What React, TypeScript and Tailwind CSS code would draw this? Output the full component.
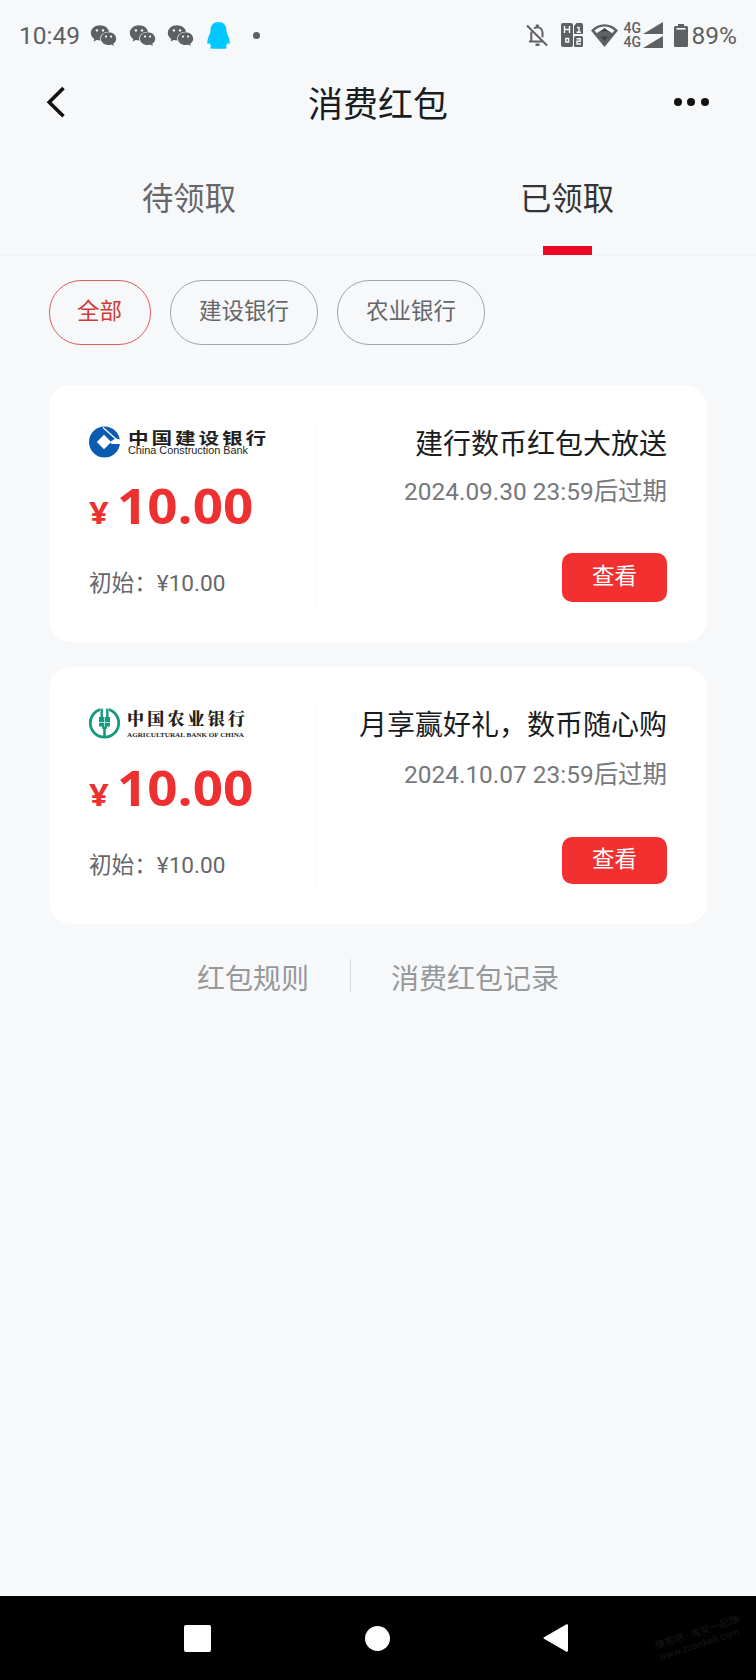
import React from "react";
import { AiFillWechat } from "react-icons/ai";

const CJK = "font-['Roboto','Noto_Sans_CJK_SC',sans-serif]";

function StatusBar() {
  return (
    <div className="flex h-[70px] items-center pl-[19px] pr-[19px] text-[#5f6062]">
      <span className="w-[61px] whitespace-nowrap pt-px text-[24.5px] leading-[30px]">10:49</span>
      <div className="ml-[9px] flex items-center gap-[9.5px]">
        <AiFillWechat className="size-[29px]" />
        <AiFillWechat className="size-[29px]" />
        <AiFillWechat className="size-[29px]" />
      </div>
      <svg className="ml-[12px] h-[27px] w-[23px]" viewBox="0 0 23 27" fill="#00c8ff">
        <path d="M11.5 0C6.500 0 3.800 3.400 3.600 7.500c0 1.800-.2 3-.9 4.400C1.300 14.800.5 17.500.3 20c0 1.400.2 2.200.6 2.100.5-.1 1-.6 1.500-1.300.4 1.400 1.100 2.500 2.100 3.500-.9.300-1.200.8-1.200 1.300 0 .8.8 1.200 1.800 1.200h12.800c1 0 1.800-.4 1.800-1.200 0-.5-.3-1-1.200-1.300 1-1 1.700-2.100 2.100-3.500.5.700 1 1.200 1.500 1.300.4.100.6-.7.6-2.100-.2-2.500-1-5.200-2.400-8.100-.7-1.400-.9-2.600-.9-4.400C19.200 3.400 16.500 0 11.500 0z" />
      </svg>
      <span className="ml-[23px] size-[7px] rounded-full bg-[#5f6062]" />

      <div className="ml-auto flex items-center">
        <svg className="h-[24px] w-[22px]" viewBox="0 0 22 24" fill="none" stroke="#5f6062" strokeWidth="2">
          <path d="M1 2.500L21 22.500" />
          <path d="M8 5.500C9 4.500 10 4.200 11.300 4.200c3.200 0 5.200 2.500 5.200 5.600v4.500M5.300 8.500v9M3 18.500h13" />
          <path d="M11.300 1.500v3" strokeWidth="3" />
          <path d="M9.500 21.700h4" strokeWidth="2.400" />
        </svg>
        <svg className="ml-[13px] h-[24px] w-[22px]" viewBox="0 0 22 24">
          <rect x="0" y="0" width="12" height="24" rx="2" fill="#5f6062" />
          <path d="M15.500 0H20a2 2 0 0 1 2 2v9h-9V3z" fill="#5f6062" />
          <rect x="13" y="13" width="9" height="11" rx="1.500" fill="#5f6062" />
          <path d="M3.500 3v7M8.500 3v7M3.500 6.500h5M4.800 15.500h2.800v3.500H4.800zM16 4.500h2v5M15.500 9.300h4.500M15.500 15.800h3.700v2.400h-3.200V21h4" fill="none" stroke="#f6f8fa" strokeWidth="1.400" />
        </svg>
        <svg className="ml-[8px] h-[23px] w-[27px]" viewBox="0 0 27 23">
          <path d="M0 6.500C7.500-1.700 19.500-1.700 27 6.500L13.500 23z" fill="#5f6062" />
          <path d="M3.500 6.500C9.500 1.300 17.500 1.300 23.500 6.500L21 9.300C19.500 7.500 16.500 6 13.500 6S7.500 7.500 6 9.300z" fill="#f6f8fa" />
          <path d="M9 7.500l4.500-3.500L18 7.500zM10 12.500h7L13.500 17z" fill="#414244" />
        </svg>
        <div className="ml-[6px] flex w-[19px] flex-col">
          <span className="h-[14px] text-[14px] font-medium leading-[14px]">4G</span>
          <span className="h-[14px] text-[14px] font-medium leading-[14px]">4G</span>
        </div>
        <svg className="h-[26px] w-[20px]" viewBox="0 0 20 26" fill="#5f6062">
          <path d="M20 0v12H0zM20 14v12H0z" />
        </svg>
        <svg className="ml-[11px] h-[23px] w-[14px]" viewBox="0 0 14 23">
          <path d="M4 0h6v2h2.500A1.500 1.500 0 0 1 14 3.500v18a1.500 1.500 0 0 1-1.500 1.500h-11A1.500 1.500 0 0 1 0 21.500v-18A1.500 1.500 0 0 1 1.500 2H4z" fill="#5f6062" />
          <path d="M2.500 4.800h9" stroke="#f6f8fa" strokeWidth="1.600" />
        </svg>
        <span className="ml-[4px] pt-px text-[24.500px] leading-[30px]">89%</span>
      </div>
    </div>
  );
}

function TitleBar() {
  return (
    <header className="flex h-[66px] items-center justify-between pl-[46px] pr-[47px]">
      <svg className="mb-[3px] h-[32px] w-[20px]" viewBox="0 0 20 32" fill="none" stroke="#111" strokeWidth="3.600">
        <path d="M17.500 2L3.200 16.200L17.500 30.300" />
      </svg>
      <h1 className="pl-[16px] pt-[6px] text-[35px] leading-[50px] text-[#1b1c1e]">消费红包</h1>
      <div className="mb-[3px] flex gap-[5.500px]">
        <span className="size-[8px] rounded-full bg-[#111]" />
        <span className="size-[8px] rounded-full bg-[#111]" />
        <span className="size-[8px] rounded-full bg-[#111]" />
      </div>
    </header>
  );
}

function Tab({ label, active }: { label: string; active?: boolean }) {
  return (
    <div className="flex h-full flex-1 flex-col items-center justify-between pt-[42px]">
      <span className={active ? "text-[31.300px] leading-[44px] text-[#333436]" : "text-[31.300px] leading-[44px] text-[#66676a]"}>{label}</span>
      {active && <span className="h-[9px] w-[49px] bg-[#ea0826]" />}
    </div>
  );
}

function Pill({ label, active }: { label: string; active?: boolean }) {
  return (
    <button
      className={
        active
          ? "h-[65px] w-[102px] rounded-[32px] border border-[#d9605f] pb-[2px] pr-[1px] text-[22.500px] text-[#cf3a36]"
          : "h-[65px] w-[148px] rounded-[32px] border border-[#a3a4a6] pb-[2px] text-[22.500px] text-[#66676a]"
      }
    >
      {label}
    </button>
  );
}

function CcbLogo() {
  return (
    <div className="flex h-[34px] items-center">
      <svg className="h-[32px] w-[32px] shrink-0" viewBox="0 0 32 32">
        <circle cx="15.500" cy="16" r="15.500" fill="#0b5bb0" />
        <path d="M15 8.800L22.200 16L15 23.200L7.800 16z" fill="#fff" />
        <path d="M21 16l5.500-3.500 5.500 1v4.500h-9.500z" fill="#fff" />
        <path d="M14 1.500L28 14" stroke="#fff" strokeWidth="1.200" />
      </svg>
      <svg className="ml-[7px] h-[34px] w-[140px] overflow-visible" viewBox="0 0 140 34" fill="#231f20">
        <text x="0" y="18.500" transform="scale(1.260 1)" fontSize="16.400" letterSpacing="2.250" fontWeight="700" fontFamily="Noto Sans CJK SC, sans-serif">中国建设银行</text>
        <text x="0" y="29" textLength="120" lengthAdjust="spacingAndGlyphs" fontSize="10.300" fontFamily="Liberation Sans, sans-serif">China Construction Bank</text>
      </svg>
    </div>
  );
}

function AbcLogo() {
  return (
    <div className="flex h-[34px] items-center">
      <svg className="h-[32px] w-[32px] shrink-0" viewBox="0 0 32 32">
        <circle cx="15.500" cy="16" r="14.200" fill="none" stroke="#149a7c" strokeWidth="2.800" />
        <path d="M11 0h9v5h-9z" fill="#fff" />
        <path d="M10 10v9.500h3.200V22h1v8h2.600v-8h1v-2.500H21V10h-1.500V1.500h-2.400V10h-3.200V1.500h-2.400V10z" fill="#149a7c" />
        <path d="M10 15.500h11M15.500 10v9.500" stroke="#d8f0ea" strokeWidth=".8" />
      </svg>
      <svg className="ml-[6px] h-[34px] w-[118px] overflow-visible" viewBox="0 0 118 34" fill="#231f20">
        <text x="0" y="18.500" textLength="118" lengthAdjust="spacing" fontSize="17" fontWeight="900" fontFamily="Noto Serif CJK SC, Noto Sans CJK SC, serif">中国农业银行</text>
        <text x="0" y="31" textLength="117" lengthAdjust="spacingAndGlyphs" fontSize="6.800" fontWeight="700" fontFamily="Liberation Serif, serif">AGRICULTURAL BANK OF CHINA</text>
      </svg>
    </div>
  );
}

function Card({ logo, title, expiry, second }: { logo: React.ReactNode; title: string; expiry: string; second?: boolean }) {
  return (
    <section className="flex h-[257px] rounded-[22px] bg-white px-[40px]">
      <div className={second ? "flex w-[226px] shrink-0 flex-col pt-[39px]" : "flex w-[226px] shrink-0 flex-col pt-[40px]"}>
        {logo}
        <div className={second ? "mt-[18px] flex h-[60px] items-baseline whitespace-nowrap text-[#ef3030]" : "mt-[17px] flex h-[60px] items-baseline whitespace-nowrap text-[#ef3030]"}>
          <span className="w-[28px] font-['Open_Sans'] text-[30px] font-bold leading-[60px]">
            <span className="inline-block origin-left scale-x-[1.15]">¥</span>
          </span>
          <span className="inline-block origin-left scale-x-[1.115] font-['Open_Sans'] text-[47.500px] font-bold leading-[60px]">10.00</span>
        </div>
        <p className="mt-[31px] text-[22.600px] leading-[34px] text-[#66676a]">初始：¥10.00</p>
      </div>
      <div className="mt-[38px] h-[182px] w-px bg-[#f9f9fa]" />
      <div className={second ? "flex flex-1 flex-col items-end whitespace-nowrap pt-[39px]" : "flex flex-1 flex-col items-end whitespace-nowrap pt-[40px]"}>
        <h2 className="text-[28px] leading-[40px] text-[#1b1c1e]">{title}</h2>
        <p className={second ? "mt-[12px] text-[24.450px] leading-[34px] text-[#77787a]" : "mt-[10px] text-[24.450px] leading-[34px] text-[#77787a]"}>{expiry}</p>
        <button
          className={
            second
              ? "mt-[45px] h-[47px] w-[105px] rounded-[10px] bg-[#f23030] pb-[2px] text-[22.500px] text-white"
              : "mt-[44px] h-[49px] w-[105px] rounded-[10px] bg-[#f23030] pb-[2px] text-[22.500px] text-white"
          }
        >
          查看
        </button>
      </div>
    </section>
  );
}

function NavBar() {
  return (
    <nav className="flex h-[84px] items-center bg-black pl-[184px]">
      <span className="size-[27px] rounded-[2px] bg-white" />
      <span className="ml-[154px] size-[25px] rounded-full bg-white" />
      <svg className="ml-[153px] h-[28px] w-[25px]" viewBox="0 0 25 28" fill="#fff" stroke="#fff" strokeWidth="2" strokeLinejoin="round">
        <path d="M1.500 14L24 1.200v25.600z" />
      </svg>
      <p className="ml-[87px] -rotate-[18deg] whitespace-nowrap text-[10px] leading-[12px] text-[#161616]">
        赚客吧 · 有奖一起赚!
        <br />
        www.zuanke8.com
      </p>
    </nav>
  );
}

export default function App() {
  return (
    <div className={`flex h-[1680px] w-[756px] flex-col overflow-hidden bg-[#f6f8fa] ${CJK}`}>
      <StatusBar />
      <TitleBar />
      <div className="flex h-[120px] border-b border-[#f1f3f6]">
        <Tab label="待领取" />
        <Tab label="已领取" active />
      </div>
      <div className="mt-[24px] flex gap-[19px] pl-[49px]">
        <Pill label="全部" active />
        <Pill label="建设银行" />
        <Pill label="农业银行" />
      </div>
      <main className="mt-[40px] flex flex-col gap-[25px] pl-[49px] pr-[49px]">
        <Card logo={<CcbLogo />} title="建行数币红包大放送" expiry="2024.09.30 23:59后过期" />
        <Card logo={<AbcLogo />} title="月享赢好礼，数币随心购" expiry="2024.10.07 23:59后过期" second />
      </main>
      <div className="mt-[35px] flex pl-[197px] text-[28px] leading-[42px] text-[#97989b]">
        <span>红包规则</span>
        <span className="ml-[41px] mr-[40px] h-[33px] w-px bg-[#d9dadd]" />
        <span>消费红包记录</span>
      </div>
      <div className="flex-1" />
      <NavBar />
    </div>
  );
}
